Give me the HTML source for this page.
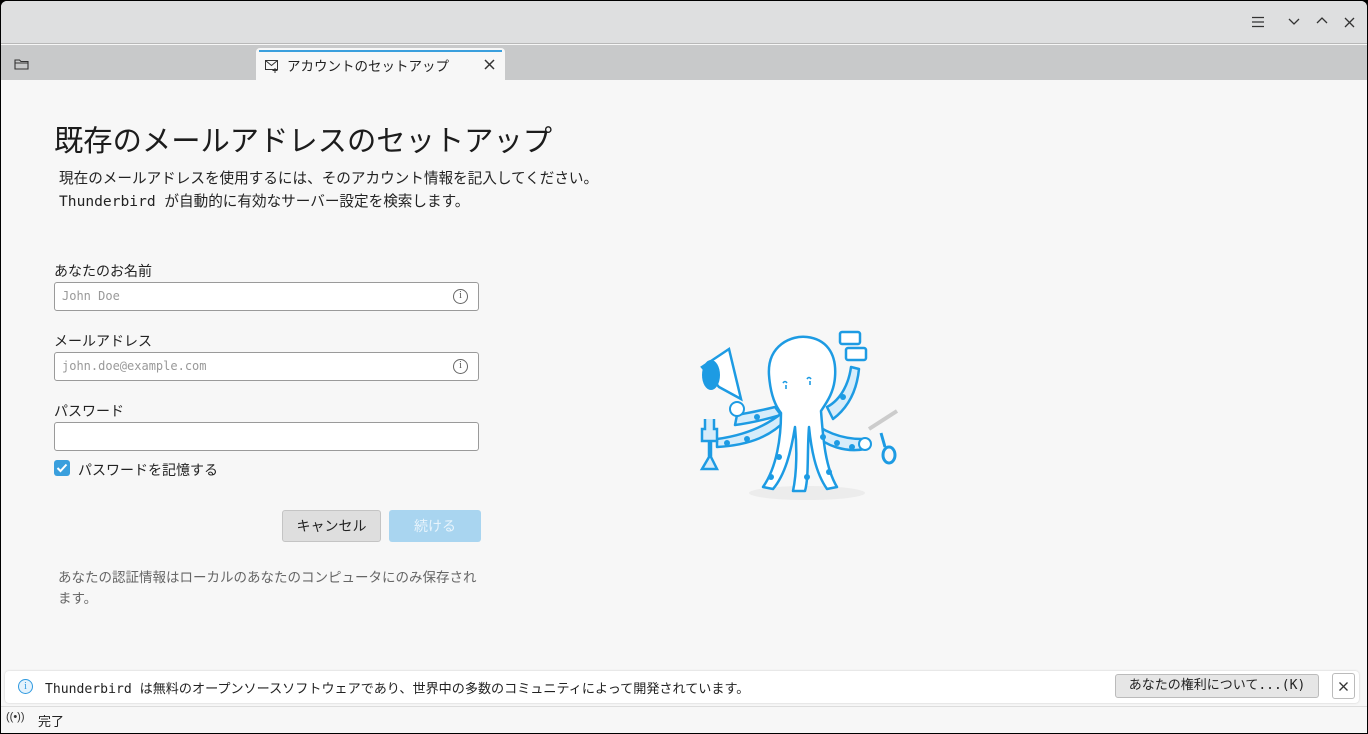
<!DOCTYPE html>
<html><head><meta charset="utf-8"><style>
*{box-sizing:border-box;margin:0;padding:0}
body{width:1368px;height:734px;overflow:hidden;background:#000;font-family:"Liberation Sans","Noto Sans CJK JP",sans-serif;color:#222}
.win{position:absolute;left:1px;top:1px;width:1366px;height:732px;background:#f7f7f7;border-radius:6px 6px 0 0;overflow:hidden}
.title{position:absolute;left:0;top:0;width:100%;height:43px;background:#dedfe0;border-bottom:1px solid #b8b8b8}
.tabs{position:absolute;left:0;top:44px;width:100%;height:35px;background:#c8c9ca}
.tab{position:absolute;left:255px;top:3px;width:249px;height:33px;background:#f7f7f7;border-radius:4px 4px 0 0}
.tab:before{content:"";position:absolute;left:3px;right:3px;top:2px;height:2px;background:#3a9fdd}
.mono{font-family:"DejaVu Sans Mono","Liberation Mono","Noto Sans CJK JP",monospace}
.t{position:absolute;white-space:nowrap}
.inp{position:absolute;left:53px;width:425px;height:29px;background:#fff;border:1px solid #9a9a9a;border-radius:3px}
.inp span{position:absolute;left:7px;top:6px;font-size:12px;color:#999}
.ii{position:absolute;right:10px;top:6px;width:15px;height:15px;border:1.5px solid #666;border-radius:50%;font-size:10px;color:#555;text-align:center;line-height:12px;font-family:"Liberation Serif",serif}
.lbl{font-size:14px;color:#222}
</style></head><body><div class="win">
<div class="title">
<svg style="position:absolute;left:1250px;top:15px" width="14" height="12"><path d="M1 1.5H13M1 6H13M1 10.5H13" stroke="#333" stroke-width="1.3"/></svg>
<svg style="position:absolute;left:1287px;top:16px" width="12" height="9"><path d="M1 2L6 7L11 2" stroke="#333" fill="none" stroke-width="1.3"/></svg>
<svg style="position:absolute;left:1315px;top:15px" width="12" height="9"><path d="M1 7L6 2L11 7" stroke="#333" fill="none" stroke-width="1.3"/></svg>
<svg style="position:absolute;left:1343px;top:16px" width="11" height="11"><path d="M1 1L10 10M10 1L1 10" stroke="#333" stroke-width="1.3"/></svg>
</div>
<div class="tabs">
<svg style="position:absolute;left:13px;top:13px" width="15" height="12"><path d="M1 2H5.5L7 3.5H14V11H1Z M1 5H14" stroke="#333" fill="none" stroke-width="1.1"/></svg>
<div class="tab">
<svg style="position:absolute;left:9px;top:12px" width="15" height="13"><rect x="0.5" y="0.5" width="12" height="9" fill="none" stroke="#333"/><path d="M0.5 0.5L6.5 5.5L12.5 0.5M10 8V13M7.5 10.5H12.5" stroke="#333" fill="none"/></svg>
<div class="t" style="left:31px;top:7px;font-size:13.5px;color:#222">アカウントのセットアップ</div>
<svg style="position:absolute;left:228px;top:11px" width="11" height="11"><path d="M1 1L10 10M10 1L1 10" stroke="#333" stroke-width="1.5"/></svg>
</div></div>
<div class="t" style="left:53px;top:117px;font-size:29.3px;color:#1c1c1c">既存のメールアドレスのセットアップ</div>
<div class="t mono" style="left:58px;top:166px;font-size:14.6px;line-height:23px">現在のメールアドレスを使用するには、そのアカウント情報を記入してください。<br>Thunderbird が自動的に有効なサーバー設定を検索します。</div>
<div class="t lbl" style="left:53px;top:260px">あなたのお名前</div>
<div class="inp" style="top:281px"><span class="mono">John Doe</span><div class="ii">i</div></div>
<div class="t lbl" style="left:53px;top:330px">メールアドレス</div>
<div class="inp" style="top:351px"><span class="mono">john.doe@example.com</span><div class="ii">i</div></div>
<div class="t lbl" style="left:53px;top:400px">パスワード</div>
<div class="inp" style="top:421px"></div>
<div style="position:absolute;left:53px;top:459px;width:16px;height:16px;background:#3a9fdd;border-radius:3px"><svg width="16" height="16"><path d="M3.5 8L6.5 11L12.5 4.5" stroke="#fff" stroke-width="2" fill="none"/></svg></div>
<div class="t lbl" style="left:77px;top:459px">パスワードを記憶する</div>
<div style="position:absolute;left:281px;top:509px;width:99px;height:32px;background:#dedede;border:1px solid #c4c4c4;border-radius:3px;font-size:14px;text-align:center;line-height:30px">キャンセル</div>
<div style="position:absolute;left:388px;top:509px;width:92px;height:32px;background:#a9d5f0;border-radius:3px;font-size:14px;text-align:center;line-height:32px;color:#e8f4fc">続ける</div>
<div class="t" style="left:57px;top:566px;font-size:13.5px;line-height:21px;color:#666">あなたの認証情報はローカルのあなたのコンピュータにのみ保存され<br>ます。</div>
<svg style="position:absolute;left:696px;top:326px" width="210" height="176" viewBox="0 0 210 176">
<ellipse cx="110" cy="166" rx="58" ry="7" fill="#ececec"/>
<g fill="#fff" stroke="#1d9be3" stroke-width="2.5" stroke-linejoin="round">
<path d="M130 80C145 72 152 55 154 40L162 42C160 62 152 80 136 92Z" fill="#d6ecfa"/>
<path d="M78 80C62 84 50 86 40 88L38 98C55 96 70 92 84 88Z" fill="#d6ecfa"/>
<path d="M110 90C125 105 145 112 165 112L168 122C148 126 128 118 118 108Z" fill="#d6ecfa"/>
<path d="M90 92C75 108 55 118 20 120L20 112C50 108 70 98 85 86Z" fill="#d6ecfa"/>
<path d="M72 48C70 18 95 8 110 10C128 12 140 25 138 50C137 65 130 75 124 84C126 110 128 140 140 160L130 162C118 145 114 120 112 100C110 125 112 150 108 164H96C100 145 100 120 98 100C94 125 88 148 76 162L66 160C80 140 84 110 84 86C76 76 73 62 72 48Z"/>
</g>
<path d="M5 40L32 22L44 72L22 60Z" fill="#fff" stroke="#1d9be3" stroke-width="2.5"/>
<ellipse cx="14" cy="48" rx="9" ry="15" fill="#1d9be3"/>
<circle cx="40" cy="82" r="7" fill="#fff" stroke="#1d9be3" stroke-width="2"/>
<rect x="143" y="5" width="20" height="12" rx="2" fill="#fff" stroke="#1d9be3" stroke-width="2.5"/>
<rect x="149" y="21" width="20" height="12" rx="2" fill="#fff" stroke="#1d9be3" stroke-width="2.5"/>
<path d="M8 92V102H5V114H12V130L5 142H20L14 130V114H20V102H17V92" fill="#d6ecfa" stroke="#1d9be3" stroke-width="2.5"/>
<path d="M172 102L200 84" stroke="#ccc" stroke-width="4"/>
<ellipse cx="192" cy="128" rx="6" ry="8" fill="none" stroke="#1d9be3" stroke-width="3"/>
<path d="M184 106L188 120" stroke="#1d9be3" stroke-width="3"/>
<circle cx="168" cy="117" r="6" fill="#fff" stroke="#1d9be3" stroke-width="2"/>
<path d="M86 56Q88 53 90 56M110 52Q112 49 114 52M89 58V62M113 54V58" stroke="#1d9be3" stroke-width="1.6" fill="none"/>
<g fill="#1d9be3"><circle cx="30" cy="116" r="3"/><circle cx="50" cy="112" r="3"/><circle cx="74" cy="150" r="3"/><circle cx="82" cy="130" r="3"/><circle cx="140" cy="116" r="3"/><circle cx="155" cy="120" r="3"/><circle cx="132" cy="145" r="3"/><circle cx="110" cy="150" r="3"/><circle cx="146" cy="70" r="3"/><circle cx="60" cy="90" r="3"/><circle cx="126" cy="110" r="3"/></g>
</svg>
<div style="position:absolute;left:4px;top:670px;width:1354px;height:32px;background:#fff;border-radius:4px;box-shadow:0 0 2px #ccc"></div>
<div style="position:absolute;left:17px;top:678px;width:15px;height:15px;border:1.3px solid #2f9ae0;border-radius:50%;background:#e4f2fc;color:#2f9ae0;font-size:10px;text-align:center;line-height:13px;font-family:'Liberation Serif',serif">i</div>
<div class="t mono" style="left:44px;top:677px;font-size:13.1px;color:#222">Thunderbird は無料のオープンソースソフトウェアであり、世界中の多数のコミュニティによって開発されています。</div>
<div class="mono" style="position:absolute;left:1114px;top:673px;width:204px;height:24px;background:#e6e6e6;border:1px solid #bbb;border-radius:3px;font-size:13px;text-align:center;line-height:22px">あなたの権利について...(K)</div>
<div style="position:absolute;left:1331px;top:672px;width:23px;height:26px;border:1px solid #bbb;border-radius:3px;background:#fff"><svg width="21" height="24"><path d="M6.5 8.5L14.5 16.5M14.5 8.5L6.5 16.5" stroke="#333" stroke-width="1.3"/></svg></div>
<div style="position:absolute;left:0;top:705px;width:100%;height:1px;background:#ddd"></div>
<div class="t" style="left:5px;top:710px;font-size:11px;color:#333">((•))</div>
<div class="t" style="left:37px;top:710px;font-size:13px;color:#222">完了</div>
</div></body></html>
